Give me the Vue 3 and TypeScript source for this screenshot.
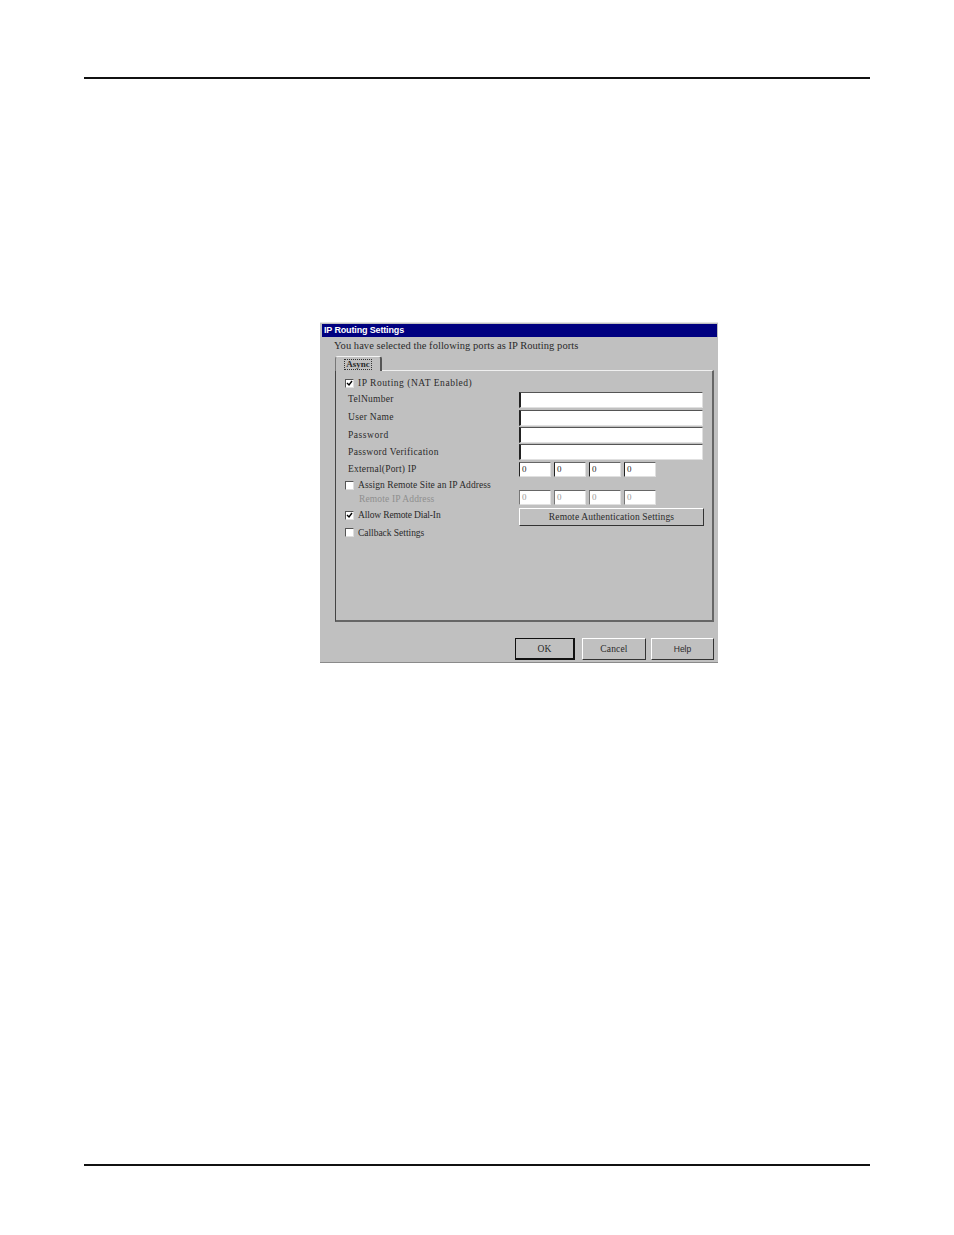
<script setup lang="ts">
interface Row {
  label: string
  height: number
  kind: 'text' | 'check'
  spacing: number
  shift: number
  checked?: boolean
  disabled?: boolean
  indent?: boolean
  right?: 'input' | 'ip' | 'ipoff' | 'button'
}
const rows: Row[] = [
  { label: 'IP Routing (NAT Enabled)', height: 18, kind: 'check', checked: true, spacing: 0.53, shift: 0 },
  { label: 'TelNumber', height: 18, kind: 'text', right: 'input', spacing: 0.3, shift: -2 },
  { label: 'User Name', height: 17, kind: 'text', right: 'input', spacing: 0.3, shift: -2 },
  { label: 'Password', height: 17, kind: 'text', right: 'input', spacing: 0.55, shift: -1 },
  { label: 'Password Verification', height: 18, kind: 'text', right: 'input', spacing: 0.35, shift: -1 },
  { label: 'External(Port) IP', height: 16, kind: 'text', right: 'ip', spacing: 0.2, shift: -1 },
  { label: 'Assign Remote Site an IP Address', height: 12, kind: 'check', spacing: 0.08, shift: 1 },
  { label: 'Remote IP Address', height: 18, kind: 'text', disabled: true, indent: true, right: 'ipoff', spacing: 0.14, shift: 0 },
  { label: 'Allow Remote Dial-In', height: 18, kind: 'check', checked: true, right: 'button', spacing: -0.15, shift: -2 },
  { label: 'Callback Settings', height: 17, kind: 'check', spacing: -0.03, shift: -2 },
]
const octets = [0, 1, 2, 3]
</script>

<template>
  <div class="page">
    <div class="rule"></div>
    <div class="dialog">
      <div class="titlebar">IP Routing Settings</div>
      <p class="intro">You have selected the following ports as IP Routing ports</p>
      <div class="tabstrip"><div class="tab"><span class="tablabel">Async</span></div></div>
      <div class="panel">
        <div v-for="row in rows" :key="row.label" class="row" :style="{ height: row.height + 'px' }">
          <div
            class="left"
            :class="{ indent: row.indent, off: row.disabled, plain: row.kind === 'text' }"
            :style="{ letterSpacing: row.spacing + 'px', marginBottom: -2 * row.shift + 'px' }"
          >
            <span v-if="row.kind === 'check'" class="box">
              <svg v-if="row.checked" width="7" height="7" viewBox="0 0 7 7"><path d="M1 3l2 2 3-4" fill="none" stroke="#000" stroke-width="1.4" /></svg>
            </span>
            <span>{{ row.label }}</span>
          </div>
          <div v-if="row.right === 'input'" class="field"></div>
          <div v-else-if="row.right === 'ip' || row.right === 'ipoff'" class="ips">
            <div v-for="o in octets" :key="o" class="octet" :class="{ dim: row.right === 'ipoff' }">0</div>
          </div>
          <button v-else-if="row.right === 'button'" class="btn wide">Remote Authentication Settings</button>
        </div>
      </div>
      <div class="actions">
        <button class="btn ok">OK</button>
        <button class="btn cancel">Cancel</button>
        <button class="btn help">Help</button>
      </div>
    </div>
    <div class="rule bottom"></div>
  </div>
</template>

<style>
html, body { background: #fff; }
</style>

<style scoped>
.page {
  width: 954px;
  height: 1235px;
  box-sizing: border-box;
  padding: 77px 84px 0;
  background: #fff;
  overflow: hidden;
  font-family: "Liberation Serif", serif;
  color: #2a2a2a;
}
.rule { height: 2px; background: #111; }
.rule.bottom { margin-top: 501px; }
.dialog {
  width: 398px;
  height: 341px;
  box-sizing: border-box;
  margin: 243px 0 0 236px;
  background: #c0c0c0;
  border-top: 1px solid #e4e4e4;
  border-bottom: 1px solid #8a8a8a;
  padding: 1px 1px 0 2px;
}
.titlebar {
  height: 13px;
  background: #000080;
  color: #fff;
  font: bold 9px/13px "Liberation Sans", sans-serif;
  padding-left: 2px;
  letter-spacing: -0.15px;
}
.intro {
  margin: 0;
  padding-left: 12px;
  height: 19px;
  font-size: 10.5px;
  line-height: 18px;
  letter-spacing: 0.05px;
  white-space: nowrap;
}
.tabstrip {
  height: 14px;
  padding-left: 13px;
  display: flex;
  align-items: flex-start;
  position: relative;
  z-index: 1;
}
.tab {
  width: 47px;
  height: 15px;
  box-sizing: border-box;
  background: #c0c0c0;
  border-top: 1px solid #f4f4f4;
  border-left: 1px solid #777;
  border-right: 2px solid #555;
  border-radius: 3px 3px 0 0;
  display: flex;
  justify-content: center;
  align-items: center;
}
.tablabel {
  font-size: 9px;
  font-weight: bold;
  line-height: 9px;
  outline: 1px dotted #333;
  padding: 0 1px;
}
.panel {
  width: 379px;
  height: 252px;
  box-sizing: border-box;
  margin-left: 13px;
  border: 1px solid #f0f0f0;
  border-left-color: #444;
  border-right: 2px solid #666;
  border-bottom: 2px solid #666;
  padding-top: 3px;
}
.row { display: flex; align-items: center; }
.left {
  width: 183px;
  flex: none;
  display: flex;
  align-items: center;
  gap: 4px;
  padding-left: 9px;
  box-sizing: border-box;
  font-size: 9.5px;
  white-space: nowrap;
}
.left.plain { padding-left: 12px; }
.left.indent { padding-left: 23px; }
.left.off { color: #8f8f8f; }
.box {
  width: 9px;
  height: 9px;
  box-sizing: border-box;
  background: #fff;
  border: 1px solid #555;
  border-right-color: #ddd;
  border-bottom-color: #ddd;
  display: flex;
  align-items: center;
  justify-content: center;
  flex: none;
}
.field {
  width: 184px;
  height: 16px;
  box-sizing: border-box;
  background: #fff;
  border: 1px solid #e0e0e0;
  border-top: 1px solid #555;
  border-left: 2px solid #222;
  align-self: flex-start;
}
.ips { display: flex; gap: 3px; align-self: flex-start; }
.octet {
  width: 32px;
  height: 15px;
  box-sizing: border-box;
  background: #fff;
  border: 1px solid #e0e0e0;
  border-top: 1px solid #666;
  border-left: 1px solid #222;
  font-size: 9px;
  line-height: 13px;
  padding-left: 2px;
}
.octet.dim { color: #999; border-left-color: #777; }
.btn {
  box-sizing: border-box;
  margin: 0;
  padding: 0;
  background: #c0c0c0;
  border: 1px solid #fff;
  border-right: 1px solid #333;
  border-bottom: 1px solid #333;
  font-family: "Liberation Serif", serif;
  font-size: 9.5px;
  letter-spacing: 0.15px;
  color: #2a2a2a;
}
.btn.wide { width: 185px; height: 18px; }
.actions {
  display: flex;
  gap: 7px;
  padding: 16px 0 0 193px;
}
.actions .btn { height: 22px; }
.ok { width: 60px; border: 1px solid #111 !important; border-right-width: 2px !important; border-bottom-width: 2px !important; }
.cancel { width: 64px; margin-right: -2px; }
.help { width: 63px; font-family: "Liberation Sans", sans-serif !important; font-size: 8.5px; letter-spacing: 0; }
</style>
